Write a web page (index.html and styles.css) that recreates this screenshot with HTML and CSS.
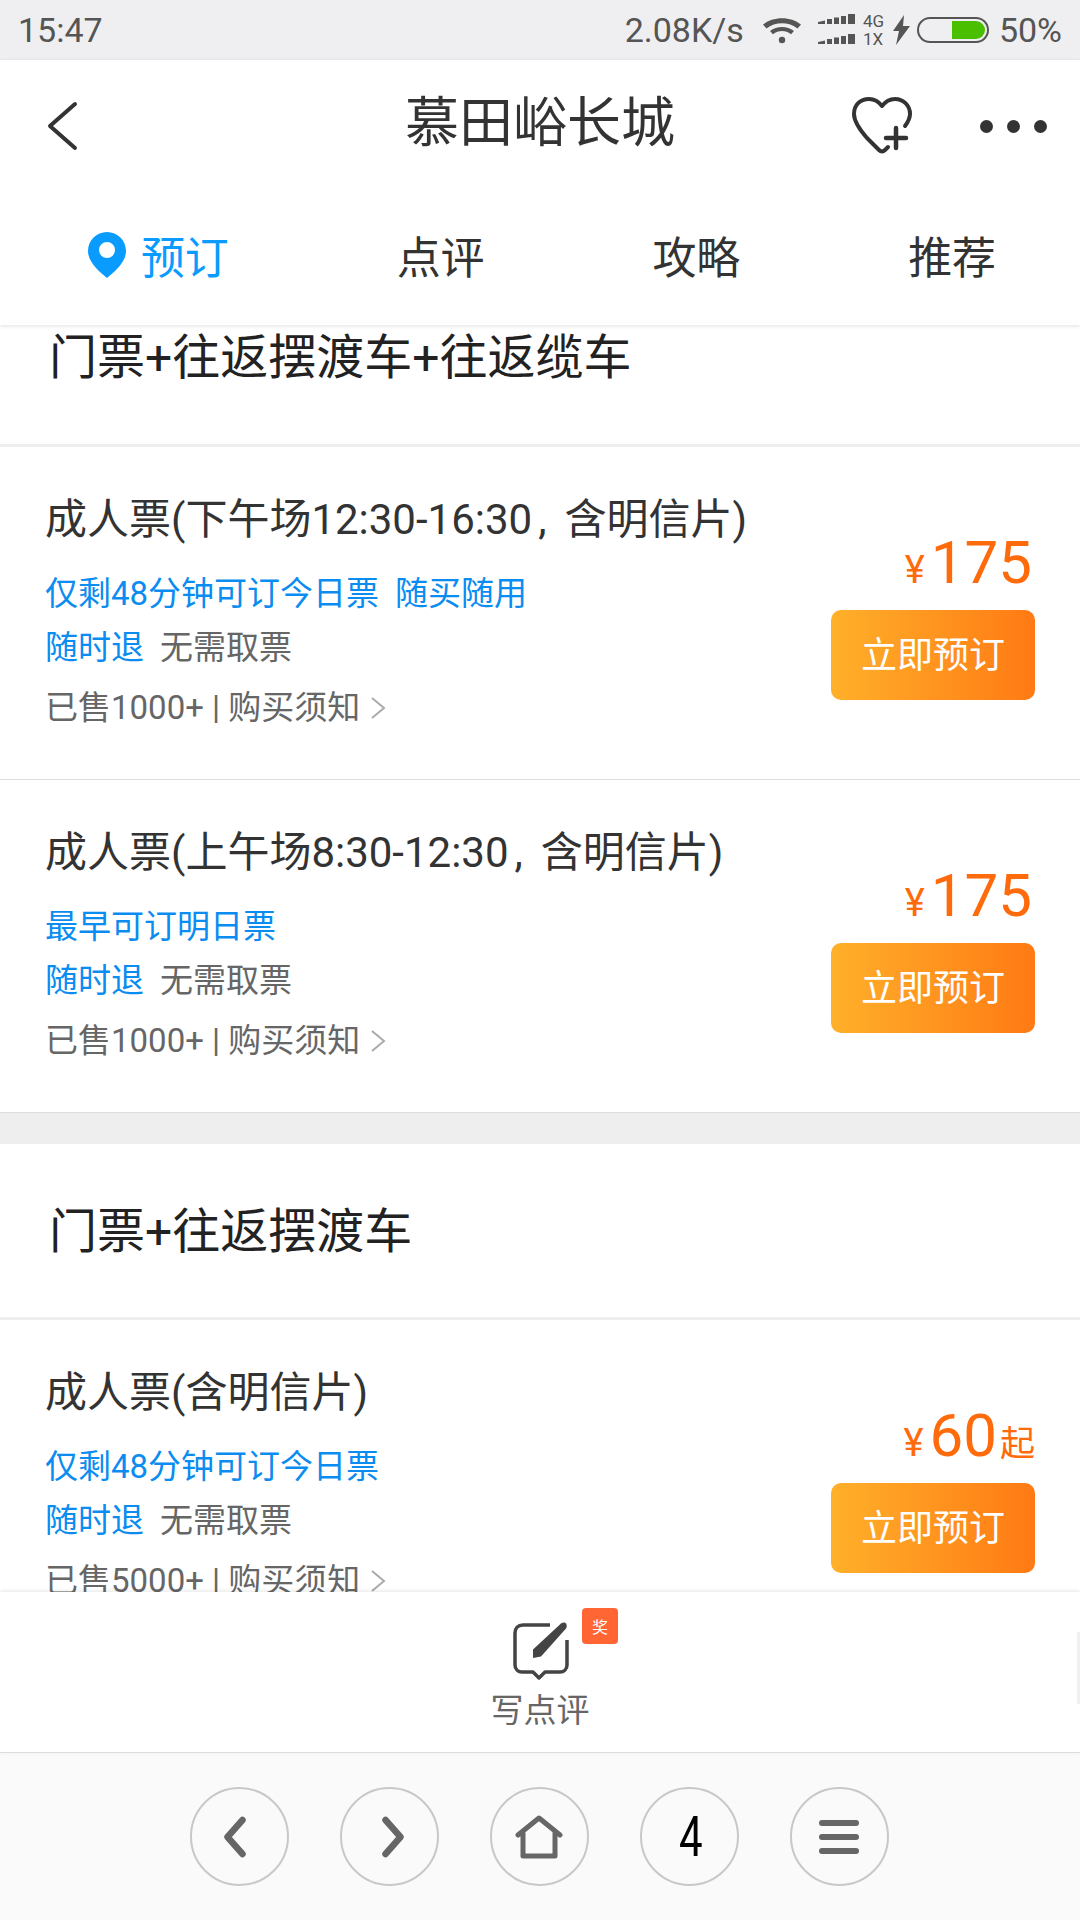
FILE: index.html
```html
<!DOCTYPE html>
<html lang="zh-CN">
<head>
<meta charset="utf-8">
<title>慕田峪长城</title>
<link rel="stylesheet" href="styles.css">
</head>
<body>
<div class="page">
  <div class="status">
    <span class="status-time">15:47</span>
    <div class="status-right">
      <span class="status-speed">2.08K/s</span>
      <svg class="ic-wifi" width="40" height="30" viewBox="0 0 40 30"><path d="M1 9.500C11 1 29 1 39 9.500L35.500 13.500C27 6.500 13 6.500 4.500 13.500Z" fill="#555"/><path d="M8 16C15 10.500 25 10.500 32 16L29 19.300C23.500 15 16.500 15 11 19.300Z" fill="#555"/><circle cx="20" cy="25" r="3.200" fill="#555"/></svg>
      <svg class="ic-signal" width="38" height="32" viewBox="0 0 38 32"><g fill="#555"><path d="M0 10h7V6.500L0 8zM9 10h5V5H9zM16 10h5V3.500h-5zM23 10h5V2h-5zM30 10h7V0h-7z"/><path d="M0 30h7v-3.500L0 28zM9 30h5v-5H9zM16 30h5v-6.500h-5zM23 30h5V22h-5zM30 30h7V20h-7z"/></g></svg>
      <span class="status-net"><span>4G</span><span>1X</span></span>
      <svg class="ic-bolt" width="17" height="30" viewBox="0 0 17 30"><path d="M11 0L0 16h6L3 30 17 11h-7z" fill="#555"/></svg>
      <span class="battery"><span class="battery-fill"></span></span>
      <span class="status-pct">50%</span>
    </div>
  </div>
  <header class="header">
    <div class="titlebar">
      <svg class="back" width="32" height="50" viewBox="0 0 32 50"><path d="M29 3L4 25l25 22" fill="none" stroke="#333" stroke-width="4" stroke-linecap="round" stroke-linejoin="round"/></svg>
      <h1 class="title">慕田峪长城</h1>
      <div class="actions">
        <svg width="62" height="60" viewBox="0 0 62 60"><path d="M54 30C57 26 59 22 59 18 59 9 52 3 44 3 38 3 34 6 31 10 28 6 24 3 18 3 9 3 3 9 3 18 3 26 9 34 16 42L28 54C30 56 32 56 34 54L37 51" fill="none" stroke="#333" stroke-width="4" stroke-linecap="round" stroke-linejoin="round"/><path d="M35 42h20M45 32v20" fill="none" stroke="#333" stroke-width="4.500" stroke-linecap="round"/></svg>
        <span class="dots"><i></i><i></i><i></i></span>
      </div>
    </div>
    <nav class="tabs">
      <a class="tab tab-on"><svg class="pin" width="38" height="46" viewBox="0 0 38 46"><path fill-rule="evenodd" d="M19 0C8.500 0 0 8.500 0 19c0 12 13 22 19 27 6-5 19-15 19-27C38 8.500 29.500 0 19 0zm0 10a8 8 0 1 1 0 16 8 8 0 0 1 0-16z" fill="#0a9bff"/></svg>预订</a>
      <a class="tab">点评</a>
      <a class="tab">攻略</a>
      <a class="tab">推荐</a>
    </nav>
  </header>
  <main class="main">
    <h2 class="group group-clipped">门票+往返摆渡车+往返缆车</h2>
    <section class="row">
      <div class="info">
        <div class="name">成人票(下午场12:30-16:30<span class="comma">,</span>含明信片)</div>
        <div class="line blue"><span>仅剩48分钟可订今日票</span><span>随买随用</span></div>
        <div class="line"><span class="blue">随时退</span><span class="grey">无需取票</span></div>
        <div class="sold">已售1000+ | 购买须知<svg class="more" width="16" height="24" viewBox="0 0 16 24"><path d="M2 2l12 10L2 22" fill="none" stroke="#aaa" stroke-width="2"/></svg></div>
      </div>
      <div class="buy">
        <div class="price"><span class="yen">¥</span><span class="num">175</span></div>
        <a class="btn">立即预订</a>
      </div>
    </section>
    <section class="row">
      <div class="info">
        <div class="name">成人票(上午场8:30-12:30<span class="comma">,</span>含明信片)</div>
        <div class="line blue"><span>最早可订明日票</span></div>
        <div class="line"><span class="blue">随时退</span><span class="grey">无需取票</span></div>
        <div class="sold">已售1000+ | 购买须知<svg class="more" width="16" height="24" viewBox="0 0 16 24"><path d="M2 2l12 10L2 22" fill="none" stroke="#aaa" stroke-width="2"/></svg></div>
      </div>
      <div class="buy">
        <div class="price"><span class="yen">¥</span><span class="num">175</span></div>
        <a class="btn">立即预订</a>
      </div>
    </section>
    <div class="divider"></div>
    <h2 class="group">门票+往返摆渡车</h2>
    <section class="row">
      <div class="info">
        <div class="name">成人票(含明信片)</div>
        <div class="line blue"><span>仅剩48分钟可订今日票</span></div>
        <div class="line"><span class="blue">随时退</span><span class="grey">无需取票</span></div>
        <div class="sold">已售5000+ | 购买须知<svg class="more" width="16" height="24" viewBox="0 0 16 24"><path d="M2 2l12 10L2 22" fill="none" stroke="#aaa" stroke-width="2"/></svg></div>
      </div>
      <div class="buy">
        <div class="price"><span class="yen">¥</span><span class="num">60</span><span class="from">起</span></div>
        <a class="btn">立即预订</a>
      </div>
    </section>
  </main>
  <div class="review">
    <div class="review-icon">
      <svg width="58" height="58" viewBox="0 0 58 58"><path d="M39 3H12C7 3 4 6 4 11v32c0 4 3 7 7 7h11l6 6 6-6h15c4 0 7-3 7-7V18" fill="none" stroke="#444" stroke-width="3.500" stroke-linejoin="round"/><path d="M50 1.500C52 0 54 0 55 1.500S56 5 55 6.500L30 34.500l-8 1.500 0-8.500z" fill="#444"/></svg>
      <span class="badge">奖</span>
    </div>
    <span class="review-label">写点评</span>
    <span class="scrollbar"></span>
  </div>
  <footer class="nav">
    <a class="nav-btn"><svg class="nav-prev" width="26" height="42" viewBox="0 0 26 42"><path d="M18.500 4L3.500 21l15 17" fill="none" stroke="#666" stroke-width="6.500" stroke-linecap="round" stroke-linejoin="round"/></svg></a>
    <a class="nav-btn"><svg class="nav-next" width="26" height="42" viewBox="0 0 26 42"><path d="M7.500 4l15 17-15 17" fill="none" stroke="#666" stroke-width="6.500" stroke-linecap="round" stroke-linejoin="round"/></svg></a>
    <a class="nav-btn"><svg width="48" height="44" viewBox="0 0 48 44"><path d="M3 20L24 3l21 17M8 18v23h32V18" fill="none" stroke="#666" stroke-width="5" stroke-linejoin="round" stroke-linecap="round"/></svg></a>
    <a class="nav-btn"><span class="nav-count">4</span></a>
    <a class="nav-btn"><span class="burger"><i></i><i></i><i></i></span></a>
  </footer>
</div>
</body>
</html>
```
FILE: styles.css
```css
* { box-sizing: border-box; margin: 0; padding: 0; }
html, body { width: 1080px; height: 1920px; overflow: hidden; background: #fff; }
body { font-family: Roboto, "Noto Sans CJK SC", sans-serif; color: #333; }
.page { display: flex; flex-direction: column; height: 1920px; }

.status { height: 60px; flex: none; background: #efeff1; color: #555; display: flex; align-items: center; justify-content: space-between; padding: 0 18px; font-size: 34px; }
.status-right { display: flex; align-items: center; }
.status-speed { margin-right: 18px; }
.ic-signal { margin-left: 16px; }
.status-net { display: flex; flex-direction: column; font-size: 17px; line-height: 18px; margin-left: 7px; width: 24px; }
.ic-bolt { margin-left: 6px; }
.battery { width: 72px; height: 26px; margin-left: 7px; border: 2px solid #555; border-radius: 13px; padding: 2px; display: flex; justify-content: flex-end; }
.battery-fill { width: 33px; height: 18px; background: #4abf00; border-radius: 0 9px 9px 0; }
.status-pct { margin-left: 10px; }

.header { height: 265px; flex: none; background: #fff; box-shadow: 0 1px 4px rgba(0,0,0,.12); position: relative; z-index: 2; }
.titlebar { height: 132px; position: relative; display: flex; align-items: center; justify-content: space-between; padding: 0 33px 0 46px; }
.title { position: absolute; left: 0; right: 0; top: 0; text-align: center; font-size: 54px; font-weight: 400; color: #333; line-height: 128px; }
.actions { display: flex; align-items: center; gap: 67px; position: relative; }
.dots { display: flex; gap: 14px; }
.dots i { width: 13px; height: 13px; border-radius: 50%; background: #333; }
.tabs { height: 133px; display: grid; grid-template-columns: repeat(4, 1fr); padding: 0 0 8px 57px; align-items: center; }
.tab { position: relative; text-align: center; font-size: 44px; color: #333; }
.tab-on { color: #0a9bff; }
.pin { position: absolute; left: 31px; top: 50%; transform: translateY(-50%); }

.main { flex: 1; min-height: 0; overflow: hidden; position: relative; }
.group { height: 176px; border-bottom: 3px solid #eee; display: flex; align-items: center; padding: 0 0 8px 49px; font-size: 48px; font-weight: 400; color: #222; }
.group-clipped { height: 122px; padding-bottom: 63px; }

.row { height: 333px; padding: 47px 45px 0 45px; border-bottom: 1px solid #ddd; display: flex; justify-content: space-between; }
.row:last-child { border-bottom: 0; }
.name { font-size: 42px; line-height: 52px; color: #333; white-space: nowrap; }
.comma { margin: 0 18px 0 6px; }
.line { font-size: 33px; line-height: 40px; margin-top: 14px; display: flex; gap: 16px; }
.name + .line { margin-top: 28px; }
.blue { color: #0a8cf0; }
.grey { color: #666; }
.sold { font-size: 33px; line-height: 40px; color: #666; margin-top: 20px; display: flex; align-items: center; }
.more { margin-left: 10px; }
.buy { display: flex; flex-direction: column; align-items: flex-end; padding-top: 30px; }
.price { color: #ff6a0a; display: flex; align-items: baseline; height: 78px; margin-bottom: 8px; }
.yen { font-size: 38px; margin-right: 6px; }
.num { font-size: 60px; line-height: 78px; margin-right: 3px; }
.from { font-size: 35px; }
.btn { width: 204px; height: 90px; padding-bottom: 6px; border-radius: 10px; background: linear-gradient(90deg, #ffb02a, #ff7a14); color: #fff; font-size: 36px; display: flex; align-items: center; justify-content: center; }

.divider { height: 31px; background: #eee; }

.review { height: 161px; flex: none; background: #fff; position: relative; z-index: 2; box-shadow: 0 -1px 4px rgba(0,0,0,.1); border-bottom: 1px solid #ddd; display: flex; flex-direction: column; align-items: center; padding-top: 30px; }
.review-icon { position: relative; height: 58px; }
.badge { position: absolute; left: 71px; top: -14px; width: 36px; height: 36px; border-radius: 4px; background: #ff6633; color: #fff; font-size: 16px; display: flex; align-items: center; justify-content: center; }
.review-label { font-size: 33px; line-height: 40px; color: #666; margin-top: 11px; }
.scrollbar { position: absolute; right: 0; top: 40px; width: 3px; height: 72px; background: #f0f0f0; }

.nav { height: 167px; flex: none; background: #fafafa; display: flex; justify-content: center; gap: 51px; padding: 34px 2px 0 0; }
.nav-btn { width: 99px; height: 99px; border: 2px solid #c8c8c8; border-radius: 50%; display: flex; align-items: center; justify-content: center; }
.nav-prev { margin-right: 4px; }
.nav-next { margin-left: 4px; }
.nav-count { display: block; margin-left: 3px; font-size: 56px; font-weight: 400; color: #000; transform: scaleX(.75); }
.burger { display: flex; flex-direction: column; gap: 8px; }
.burger i { display: block; width: 40px; height: 6px; border-radius: 3px; background: #666; }
```
